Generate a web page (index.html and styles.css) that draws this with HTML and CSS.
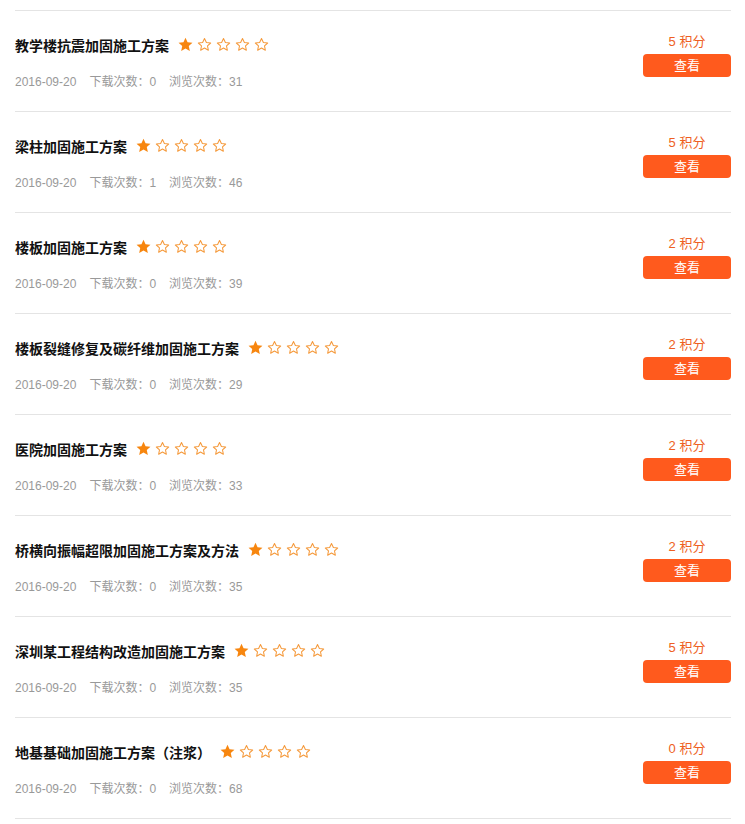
FILE: index.html
```html
<!DOCTYPE html>
<html lang="zh-CN">
<head>
<meta charset="utf-8">
<title>加固施工方案</title>
<link rel="stylesheet" href="styles.css">
</head>
<body>
<svg width="0" height="0" class="defs">
  <defs>
    <symbol id="star-full" viewBox="0 0 16 16">
      <polygon points="8,0.8 10.2,5.6 15.4,6.1 11.5,9.6 12.6,14.8 8,12.2 3.4,14.8 4.5,9.6 0.6,6.1 5.8,5.6" fill="#f7860f"/>
    </symbol>
    <symbol id="star-empty" viewBox="0 0 16 16">
      <polygon points="8,1.6 10,5.9 14.6,6.4 11.2,9.5 12.1,14.1 8,11.8 3.9,14.1 4.8,9.5 1.4,6.4 6,5.9" fill="none" stroke="#f59a3c" stroke-width="1.1" stroke-linejoin="round"/>
    </symbol>
  </defs>
</svg>
<ul class="list">
  <li class="item">
    <div class="info">
      <div class="title"><span class="name">教学楼抗震加固施工方案</span><span class="stars"><svg><use href="#star-full"/></svg><svg><use href="#star-empty"/></svg><svg><use href="#star-empty"/></svg><svg><use href="#star-empty"/></svg><svg><use href="#star-empty"/></svg></span></div>
      <div class="meta"><span>2016-09-20</span><span>下载次数：0</span><span>浏览次数：31</span></div>
    </div>
    <div class="side"><div class="points">5 积分</div><a class="btn" href="#">查看</a></div>
  </li>
  <li class="item">
    <div class="info">
      <div class="title"><span class="name">梁柱加固施工方案</span><span class="stars"><svg><use href="#star-full"/></svg><svg><use href="#star-empty"/></svg><svg><use href="#star-empty"/></svg><svg><use href="#star-empty"/></svg><svg><use href="#star-empty"/></svg></span></div>
      <div class="meta"><span>2016-09-20</span><span>下载次数：1</span><span>浏览次数：46</span></div>
    </div>
    <div class="side"><div class="points">5 积分</div><a class="btn" href="#">查看</a></div>
  </li>
  <li class="item">
    <div class="info">
      <div class="title"><span class="name">楼板加固施工方案</span><span class="stars"><svg><use href="#star-full"/></svg><svg><use href="#star-empty"/></svg><svg><use href="#star-empty"/></svg><svg><use href="#star-empty"/></svg><svg><use href="#star-empty"/></svg></span></div>
      <div class="meta"><span>2016-09-20</span><span>下载次数：0</span><span>浏览次数：39</span></div>
    </div>
    <div class="side"><div class="points">2 积分</div><a class="btn" href="#">查看</a></div>
  </li>
  <li class="item">
    <div class="info">
      <div class="title"><span class="name">楼板裂缝修复及碳纤维加固施工方案</span><span class="stars"><svg><use href="#star-full"/></svg><svg><use href="#star-empty"/></svg><svg><use href="#star-empty"/></svg><svg><use href="#star-empty"/></svg><svg><use href="#star-empty"/></svg></span></div>
      <div class="meta"><span>2016-09-20</span><span>下载次数：0</span><span>浏览次数：29</span></div>
    </div>
    <div class="side"><div class="points">2 积分</div><a class="btn" href="#">查看</a></div>
  </li>
  <li class="item">
    <div class="info">
      <div class="title"><span class="name">医院加固施工方案</span><span class="stars"><svg><use href="#star-full"/></svg><svg><use href="#star-empty"/></svg><svg><use href="#star-empty"/></svg><svg><use href="#star-empty"/></svg><svg><use href="#star-empty"/></svg></span></div>
      <div class="meta"><span>2016-09-20</span><span>下载次数：0</span><span>浏览次数：33</span></div>
    </div>
    <div class="side"><div class="points">2 积分</div><a class="btn" href="#">查看</a></div>
  </li>
  <li class="item">
    <div class="info">
      <div class="title"><span class="name">桥横向振幅超限加固施工方案及方法</span><span class="stars"><svg><use href="#star-full"/></svg><svg><use href="#star-empty"/></svg><svg><use href="#star-empty"/></svg><svg><use href="#star-empty"/></svg><svg><use href="#star-empty"/></svg></span></div>
      <div class="meta"><span>2016-09-20</span><span>下载次数：0</span><span>浏览次数：35</span></div>
    </div>
    <div class="side"><div class="points">2 积分</div><a class="btn" href="#">查看</a></div>
  </li>
  <li class="item">
    <div class="info">
      <div class="title"><span class="name">深圳某工程结构改造加固施工方案</span><span class="stars"><svg><use href="#star-full"/></svg><svg><use href="#star-empty"/></svg><svg><use href="#star-empty"/></svg><svg><use href="#star-empty"/></svg><svg><use href="#star-empty"/></svg></span></div>
      <div class="meta"><span>2016-09-20</span><span>下载次数：0</span><span>浏览次数：35</span></div>
    </div>
    <div class="side"><div class="points">5 积分</div><a class="btn" href="#">查看</a></div>
  </li>
  <li class="item">
    <div class="info">
      <div class="title"><span class="name">地基基础加固施工方案（注浆）</span><span class="stars"><svg><use href="#star-full"/></svg><svg><use href="#star-empty"/></svg><svg><use href="#star-empty"/></svg><svg><use href="#star-empty"/></svg><svg><use href="#star-empty"/></svg></span></div>
      <div class="meta"><span>2016-09-20</span><span>下载次数：0</span><span>浏览次数：68</span></div>
    </div>
    <div class="side"><div class="points">0 积分</div><a class="btn" href="#">查看</a></div>
  </li>
</ul>
</body>
</html>
```

FILE: styles.css
```css
html, body {
  margin: 0;
  padding: 0;
  background: #fff;
}
body {
  font-family: "Liberation Sans", "Noto Sans CJK SC", sans-serif;
  padding: 10px 14px 0 15px;
}
.defs {
  position: absolute;
  width: 0;
  height: 0;
  overflow: hidden;
}
.list {
  list-style: none;
  margin: 0;
  padding: 0;
  border-bottom: 1px solid #e4e4e4;
}
.item {
  display: flex;
  justify-content: space-between;
  border-top: 1px solid #e4e4e4;
  height: 100px;
  box-sizing: content-box;
}
.info {
  padding-top: 24px;
}
.title {
  display: flex;
  align-items: center;
  height: 20px;
}
.name {
  font-family: "Noto Sans CJK SC", sans-serif;
  font-size: 14px;
  font-weight: 700;
  color: #111;
  line-height: 20px;
}
.stars {
  display: flex;
  gap: 4px;
  margin-left: 9px;
  margin-top: -2px;
}
.stars svg {
  width: 15px;
  height: 15px;
}
.meta {
  margin-top: 17px;
  font-family: "Liberation Sans", "Noto Sans CJK TC", sans-serif;
  font-size: 12px;
  line-height: 20px;
  color: #999;
  display: flex;
  gap: 13px;
}
.side {
  width: 88px;
  padding-top: 21px;
  display: flex;
  flex-direction: column;
  align-items: center;
}
.points {
  font-size: 13px;
  line-height: 20px;
  color: #ee5f22;
}
.btn {
  margin-top: 2px;
  display: block;
  width: 88px;
  height: 23px;
  line-height: 23px;
  text-align: center;
  background: #ff5a1d;
  color: #fff;
  border-radius: 4px;
  font-size: 13px;
  text-decoration: none;
}
```
